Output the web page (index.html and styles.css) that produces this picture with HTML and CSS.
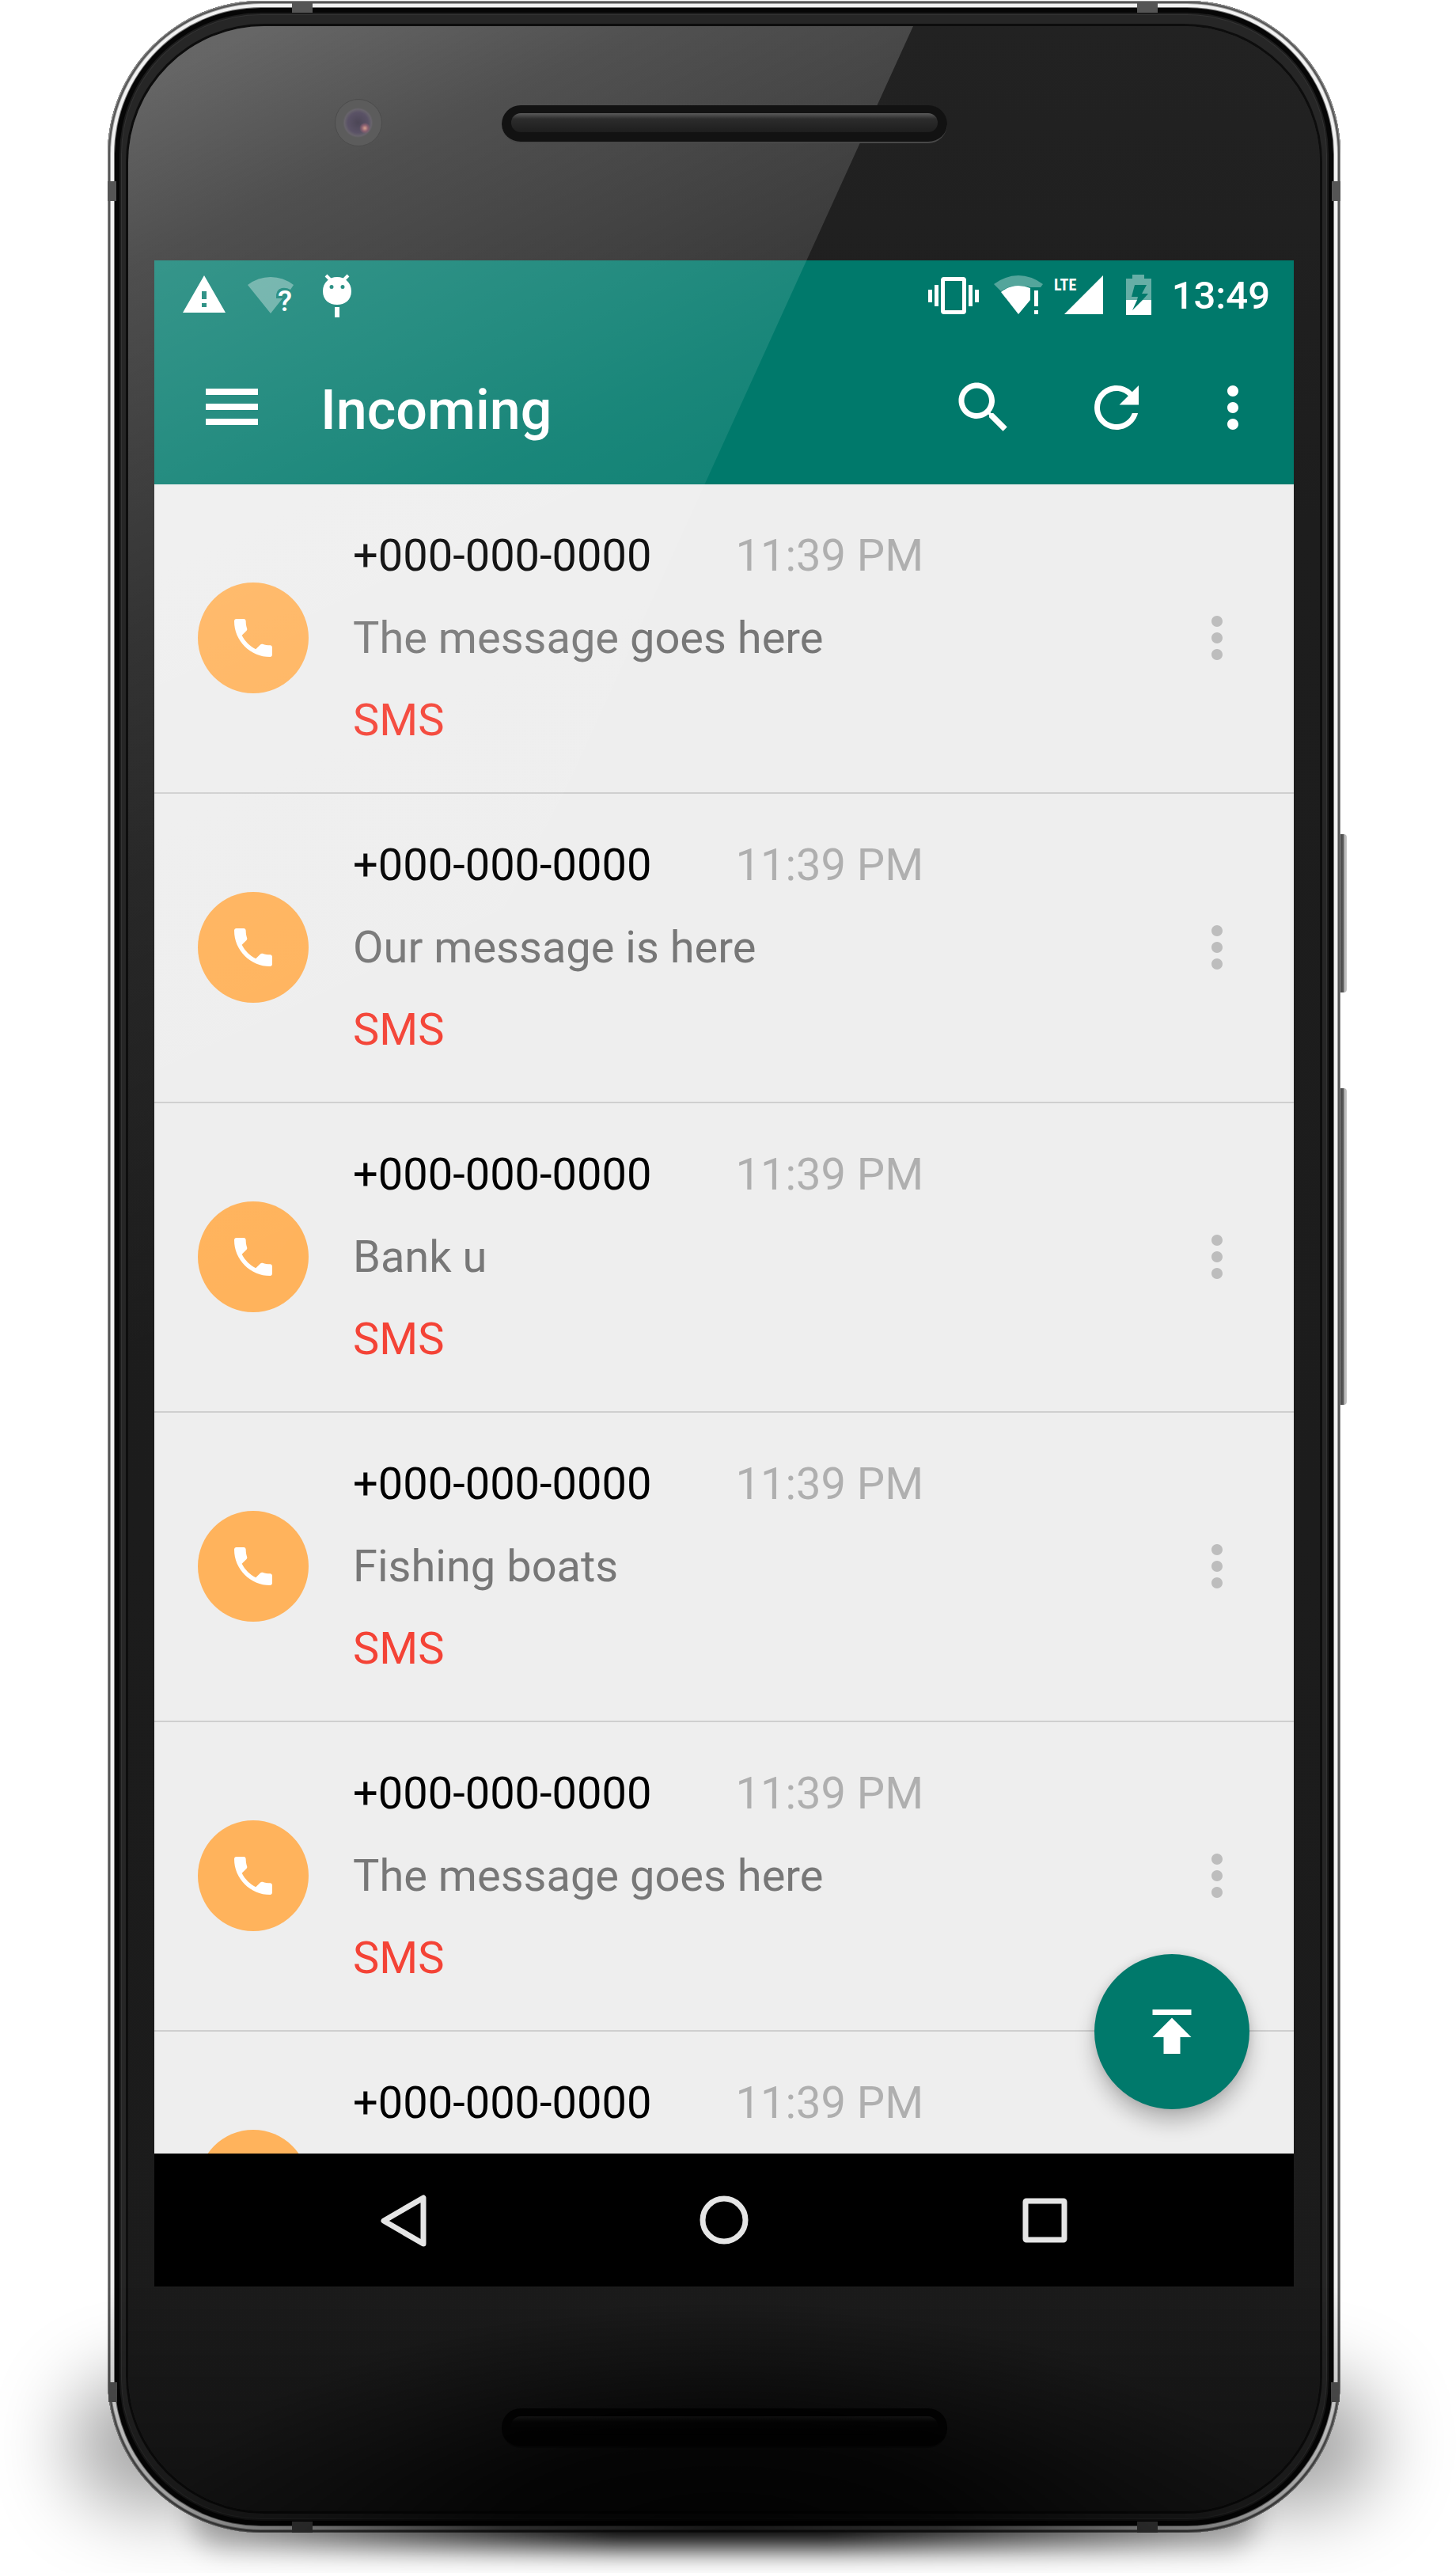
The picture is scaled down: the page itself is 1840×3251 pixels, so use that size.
FILE: index.html
```html
<!DOCTYPE html>
<html lang="en">
<head>
<meta charset="utf-8">
<meta name="viewport" content="width=device-width, initial-scale=1">
<title>Incoming</title>
<link rel="stylesheet" href="styles.css">
</head>
<body>
<svg class="sprite" aria-hidden="true">
  <symbol id="call" viewBox="0 0 24 24"><path d="M6.62 10.79c1.44 2.83 3.76 5.14 6.59 6.59l2.2-2.2c.27-.27.67-.36 1.02-.24 1.12.37 2.33.57 3.57.57.55 0 1 .45 1 1V20c0 .55-.45 1-1 1-9.39 0-17-7.61-17-17 0-.55.45-1 1-1h3.500c.55 0 1 .45 1 1 0 1.250.2 2.450.57 3.570.11.35.03.74-.25 1.020l-2.200 2.200z"/></symbol>
  <symbol id="more" viewBox="0 0 24 24"><path d="M12 8c1.100 0 2-.9 2-2s-.9-2-2-2-2 .9-2 2 .9 2 2 2zm0 2c-1.100 0-2 .9-2 2s.9 2 2 2 2-.9 2-2-.9-2-2-2zm0 6c-1.100 0-2 .9-2 2s.9 2 2 2 2-.9 2-2-.9-2-2-2z"/></symbol>
</svg>
<main class="stage">
  <div class="shadow shadow-wide"></div>
  <div class="shadow shadow-deep"></div>
  <div class="side-key power"></div>
  <div class="side-key volume"></div>
  <div class="device">
    <div class="glass"></div>
    <i class="band top start"></i><i class="band top end"></i>
    <i class="band bottom start"></i><i class="band bottom end"></i>
    <i class="band left upper"></i><i class="band left lower"></i>
    <i class="band right upper"></i><i class="band right lower"></i>
    <div class="bezel bezel-top">
      <div class="camera"></div>
      <div class="speaker"></div>
    </div>
    <div class="screen">
      <div class="statusbar">
        <div class="notices">
          <svg class="i84" viewBox="0 0 84 84"><path fill-rule="evenodd" d="M42 19L69 66H15zM39 39v10h6V39zm0 15v5h6v-5z"/></svg>
          <svg class="i84" viewBox="0 0 84 84"><path opacity=".35" d="M42 67L13 31Q26 21 42 21T71 31L67 37Q62 34 56 35 48 37 49 48H57z"/><text class="mark" x="51" y="64">?</text></svg>
          <svg class="i84" viewBox="0 0 84 84"><path fill-rule="evenodd" d="M42 21c10 0 18 7 18 18s-8 17-18 17-18-6-18-17 8-18 18-18zM35 31a2.500 2.500 0 100 5 2.500 2.500 0 000-5zm14 0a2.500 2.500 0 100 5 2.500 2.500 0 000-5z"/><path d="M39 59h6v13h-6z"/><path class="line" d="M28 19l6 6M56 19l-6 6"/></svg>
        </div>
        <div class="system">
          <svg class="i84" viewBox="0 0 84 84"><path fill-rule="evenodd" d="M30 21h24a4 4 0 014 4v39a4 4 0 01-4 4H30a4 4 0 01-4-4V25a4 4 0 014-4zm1 5v37h22V26zM10 37h5v16h-5zm8-6h5v27h-5zm43 0h5v27h-5zm8 6h5v16h-5z"/></svg>
          <svg class="i80" viewBox="0 0 80 84"><path opacity=".33" d="M9 30Q24 19 40 19T71 30L68 34H55Q50 32 40 32 28 32 18 39z"/><path d="M40 68L18 40Q28 32 40 32 48 32 55 35V50zM60 38h5v20h-5zm0 25h5v5h-5z"/></svg>
          <svg class="i74" viewBox="0 0 74 84"><text class="lte" x="5" y="38">LTE</text><path d="M67 19V68H18z"/></svg>
          <svg class="i80" viewBox="0 0 80 84"><path opacity=".4" fill-rule="evenodd" d="M30 18h15v5h9v27H22V23h8zM33 31L29 46h8l-1 4h7l7-8h-8l6-11z"/><path fill-rule="evenodd" d="M22 50h32v19H22zM36 50L30 63 43 50z"/></svg>
          <time class="clock">13:49</time>
        </div>
      </div>
      <header class="toolbar">
        <button class="menu" aria-label="Menu"><svg viewBox="0 0 84 84"><path d="M9 18h66v8H9zm0 19h66v8H9zm0 19h66v8H9z"/></svg></button>
        <h1 class="title">Incoming</h1>
        <button class="action" aria-label="Search"><svg viewBox="0 0 24 24"><path d="M15.500 14h-.79l-.28-.27C15.410 12.590 16 11.110 16 9.500 16 5.910 13.090 3 9.500 3S3 5.910 3 9.500 5.910 16 9.500 16c1.610 0 3.090-.59 4.230-1.570l.27.28v.79l5 4.990L20.490 19l-4.990-5zm-6 0C7.010 14 5 11.990 5 9.500S7.010 5 9.500 5 14 7.010 14 9.500 11.990 14 9.500 14z"/></svg></button>
        <button class="action" aria-label="Refresh"><svg viewBox="0 0 24 24"><path d="M17.650 6.350C16.200 4.900 14.210 4 12 4c-4.420 0-7.990 3.580-7.990 8s3.570 8 7.990 8c3.730 0 6.840-2.550 7.730-6h-2.080c-.82 2.330-3.040 4-5.650 4-3.310 0-6-2.690-6-6s2.690-6 6-6c1.660 0 3.140.69 4.220 1.780L13 11h7V4l-2.350 2.350z"/></svg></button>
        <button class="action overflow" aria-label="More options"><svg><use href="#more"/></svg></button>
      </header>
      <ul class="list">
        <li class="row"><span class="avatar"><svg><use href="#call"/></svg></span><div class="body"><div class="head"><span class="number">+000-000-0000</span><time class="time">11:39 PM</time></div><p class="message">The message goes here</p><p class="kind">SMS</p></div><button class="item-menu" aria-label="Item options"><svg><use href="#more"/></svg></button></li>
        <li class="row"><span class="avatar"><svg><use href="#call"/></svg></span><div class="body"><div class="head"><span class="number">+000-000-0000</span><time class="time">11:39 PM</time></div><p class="message">Our message is here</p><p class="kind">SMS</p></div><button class="item-menu" aria-label="Item options"><svg><use href="#more"/></svg></button></li>
        <li class="row"><span class="avatar"><svg><use href="#call"/></svg></span><div class="body"><div class="head"><span class="number">+000-000-0000</span><time class="time">11:39 PM</time></div><p class="message">Bank u</p><p class="kind">SMS</p></div><button class="item-menu" aria-label="Item options"><svg><use href="#more"/></svg></button></li>
        <li class="row"><span class="avatar"><svg><use href="#call"/></svg></span><div class="body"><div class="head"><span class="number">+000-000-0000</span><time class="time">11:39 PM</time></div><p class="message">Fishing boats</p><p class="kind">SMS</p></div><button class="item-menu" aria-label="Item options"><svg><use href="#more"/></svg></button></li>
        <li class="row"><span class="avatar"><svg><use href="#call"/></svg></span><div class="body"><div class="head"><span class="number">+000-000-0000</span><time class="time">11:39 PM</time></div><p class="message">The message goes here</p><p class="kind">SMS</p></div><button class="item-menu" aria-label="Item options"><svg><use href="#more"/></svg></button></li>
        <li class="row cut"><span class="avatar"><svg><use href="#call"/></svg></span><div class="body"><div class="head"><span class="number">+000-000-0000</span><time class="time">11:39 PM</time></div></div></li>
      </ul>
      <button class="fab" aria-label="Scroll to top"><svg viewBox="0 0 24 24"><path d="M5 4v2h14V4H5zm0 10h4v6h6v-6h4l-7-7-7 7z"/></svg></button>
      <nav class="navbar">
        <button aria-label="Back"><svg viewBox="0 0 84 84"><path d="M67 14V72L17 43z"/></svg></button>
        <button aria-label="Home"><svg viewBox="0 0 84 84"><circle cx="42" cy="42" r="27"/></svg></button>
        <button aria-label="Recent apps"><svg viewBox="0 0 84 84"><rect x="18" y="18" width="49" height="49" rx="1"/></svg></button>
      </nav>
    </div>
    <div class="bezel bezel-bottom"><div class="speaker speaker-low"></div></div>
    <div class="shade"></div>
    <div class="glare"></div>
  </div>
</main>
</body>
</html>
```
FILE: styles.css
```css
* { box-sizing: border-box; }

body {
  margin: 0;
  background: #fff;
  font-family: Roboto, "Liberation Sans", sans-serif;
}

button {
  border: 0;
  padding: 0;
  background: none;
  display: flex;
  align-items: center;
  justify-content: center;
}

h1, p, ul { margin: 0; padding: 0; }

svg { display: block; fill: currentColor; }

.sprite { position: absolute; width: 0; height: 0; }

.stage {
  position: relative;
  overflow: hidden;
  padding: 1px 146px 51px 136px;
}

/* Ground shadow */
.shadow { position: absolute; }

.shadow-wide {
  left: 90px;
  right: 100px;
  bottom: 84px;
  height: 160px;
  border-radius: 80px;
  background: rgba(0, 0, 0, .36);
  filter: blur(48px);
}

.shadow-deep {
  left: 240px;
  right: 250px;
  bottom: 32px;
  height: 80px;
  border-radius: 40px;
  background: linear-gradient(90deg, rgba(0, 0, 0, .25), #000 40%, #000 60%, rgba(0, 0, 0, .25));
  filter: blur(16px);
}

/* Phone body */
.device {
  position: relative;
  padding: 0 59px;
  border-radius: 194px;
  background: #262626;
  box-shadow:
    inset 0 0 0 1px #8c8c8c,
    inset 0 0 0 3px #555,
    inset 0 0 0 4px #a0a0a0,
    inset 0 0 0 8px #f2f2f2,
    inset 0 0 0 9px #777,
    inset 0 0 0 15px #060606,
    inset 0 0 0 17px #1c1c1c,
    inset 0 0 0 18px #333;
}

.glass {
  position: absolute;
  inset: 32px 26px 27px;
  border-radius: 172px;
  background: linear-gradient(#222, #1d1d1d 20%, #1b1b1b);
  box-shadow: 0 0 0 3px #0d0d0d;
}

.side-key {
  position: absolute;
  right: 138px;
  width: 10px;
  border-radius: 0 4px 4px 0;
  background: linear-gradient(90deg, #3c3c3c, #5a5a5a 55%, #b4b4b4 70%, #c8c8c8);
}

.power { top: 1047px; height: 136px; }
.power { top: 1054px; height: 200px; }
.volume { top: 1375px; height: 400px; }

.band { position: absolute; background: #555; }
.band.top, .band.bottom { width: 26px; height: 14px; }
.band.left, .band.right { width: 11px; height: 25px; }
.top { top: 1px; }
.bottom { bottom: 0; }
.left { left: 0; }
.right { right: 0; }
.start { left: 233px; }
.end { right: 231px; }
.upper { top: 228px; }
.lower { bottom: 165px; }
.lower.left { left: 1px; }
.lower.right { right: 1px; }

.bezel { position: relative; }

.bezel-top {
  z-index: 1;
  height: 328px;
  padding-top: 132px;
  display: grid;
  grid-template-columns: 1fr 563px 1fr;
}

.bezel-bottom {
  height: 311px;
  padding-top: 154px;
  display: flex;
  justify-content: center;
}

.camera {
  justify-self: end;
  margin-right: 151px;
  width: 60px;
  height: 60px;
  margin-top: -8px;
  border-radius: 50%;
  border: 1px solid #4c4c4c;
  background:
    radial-gradient(circle at 64% 62%, #d8a090 0, #8a6070 4px, transparent 7px),
    radial-gradient(circle at 49% 50%, #4c4656 0, #5a5266 13px, #68646c 17px, #5c5c5c 19px);
}

.speaker {
  width: 563px;
  height: 48px;
  padding: 10px 12px 14px;
  border-radius: 24px;
  background: #121212;
  border-bottom: 2px solid #484848;
}

.speaker::before {
  content: "";
  display: block;
  height: 24px;
  border-radius: 12px;
  background: linear-gradient(#5a5a5a, #2c2c2c 30%, #1e1e1e);
}

.speaker-low { background: #050505; border-color: #111; height: 50px; }
.speaker-low::before { background: linear-gradient(#2a2a2a, #0a0a0a 30%, #030303); }

.shade {
  position: absolute;
  left: 0;
  right: 0;
  bottom: 0;
  height: 311px;
  border-radius: 0 0 194px 194px;
  background:
    radial-gradient(ellipse 700px 290px at 50% 100%, rgba(0, 0, 0, .85), rgba(0, 0, 0, .7) 40%, rgba(0, 0, 0, .25) 75%, transparent),
    linear-gradient(transparent, rgba(0, 0, 0, .4));
}

.glare {
  position: absolute;
  inset: 32px 26px 27px;
  border-radius: 172px;
  pointer-events: none;
  clip-path: polygon(0 0, 992px 0, 728px 580px, 560px 950px, 380px 1300px, 0 1800px);
  background: linear-gradient(155deg, rgba(255, 255, 255, .31) 2%, rgba(255, 255, 255, .21) 8%, rgba(255, 255, 255, .15) 15%, rgba(255, 255, 255, .1) 20%, rgba(255, 255, 255, .05) 28%, transparent 44%);
}

/* Screen */
.screen {
  position: relative;
  aspect-ratio: 9 / 16;
  display: flex;
  flex-direction: column;
  background: #eee;
  color: #fff;
}

.statusbar {
  height: 84px;
  flex: none;
  display: flex;
  justify-content: space-between;
  padding: 0 30px 0 21px;
  background: #00796b;
}

.notices, .system { display: flex; align-items: center; }

.i84 { width: 84px; height: 84px; }
.i80 { width: 80px; height: 84px; }
.i74 { width: 74px; height: 84px; }

.line { stroke: currentColor; stroke-width: 4; }
.mark { font-size: 37px; font-weight: 500; }
.lte { font-family: "Roboto Condensed", "Liberation Sans Narrow", Roboto, sans-serif; font-size: 20px; font-weight: 700; }

.clock { padding-top: 6px; font-size: 49px; line-height: 84px; font-weight: 500; }

.toolbar {
  height: 199px;
  flex: none;
  display: flex;
  align-items: center;
  padding: 4px 14px 0 56px;
  background: #00796b;
}

.toolbar button { color: #fff; }
.toolbar svg { width: 84px; height: 84px; }

.menu { width: 84px; }

.title {
  flex: 1;
  padding: 6px 0 0 70px;
  font-size: 70px;
  line-height: 82px;
  font-weight: 500;
}

.action { width: 168px; height: 168px; }
.toolbar .overflow { width: 126px; }

.list {
  flex: 1;
  min-height: 0;
  overflow: hidden;
  list-style: none;
  font-size: 56px;
  line-height: 66px;
}

.row {
  display: flex;
  align-items: center;
  gap: 56px;
  padding: 57px 55px 58px;
  border-bottom: 2px solid #cfcfcf;
}

.cut { align-items: flex-start; }
.cut .avatar { margin-top: 67px; }

.avatar {
  width: 140px;
  height: 140px;
  flex: none;
  border-radius: 50%;
  display: flex;
  align-items: center;
  justify-content: center;
  background: #ffb35c;
}

.avatar svg { width: 64px; height: 64px; }

.body {
  flex: 1;
  display: flex;
  flex-direction: column;
  gap: 38px;
}

.head { display: flex; gap: 106px; }
.number { color: #000; }
.time { color: #afafaf; }
.message { color: #777; }
.kind { color: #f44336; }

.item-menu { color: #bdbdbd; }
.item-menu svg { width: 84px; height: 84px; }

.fab {
  position: absolute;
  right: 56px;
  bottom: 224px;
  width: 196px;
  height: 196px;
  border-radius: 50%;
  background: #00796b;
  color: #fff;
  box-shadow: 0 16px 26px rgba(0, 0, 0, .24), 0 0 12px rgba(0, 0, 0, .1);
}

.fab svg { width: 84px; height: 84px; }

.navbar {
  height: 168px;
  flex: none;
  display: flex;
  justify-content: center;
  background: #000;
}

.navbar button { flex: 0 1 405px; }

.navbar svg {
  width: 84px;
  height: 84px;
  fill: none;
  stroke: #e5e5e5;
  stroke-width: 7;
  stroke-linejoin: round;
}
```
